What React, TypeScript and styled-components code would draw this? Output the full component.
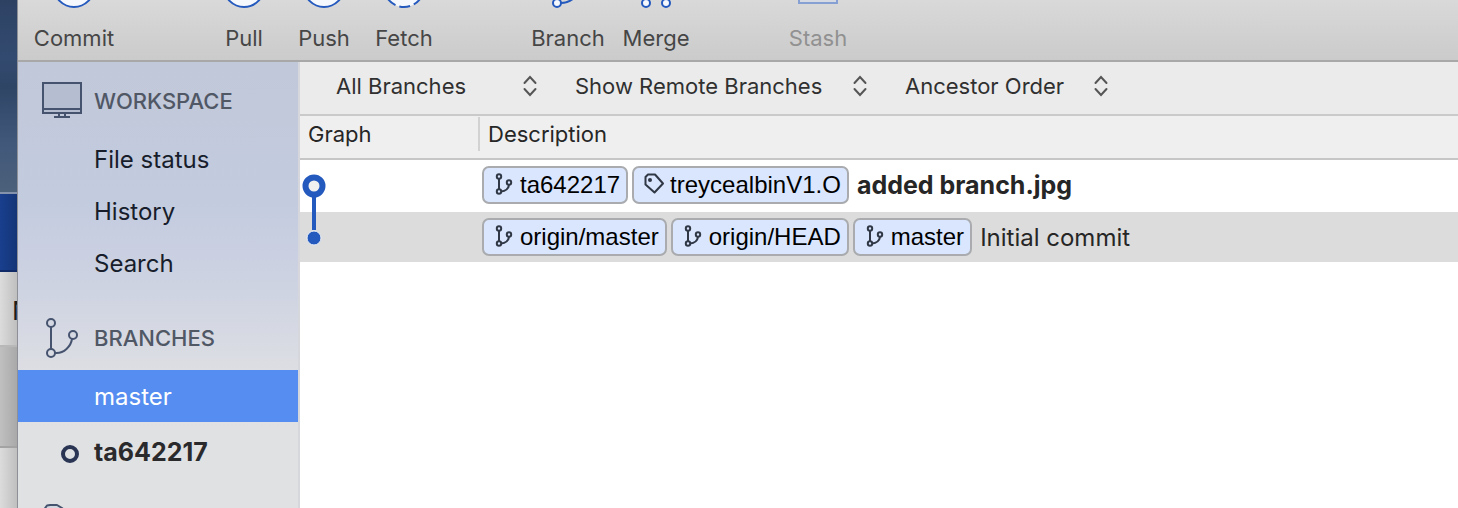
import React from "react";
import styled, { createGlobalStyle, css } from "styled-components";

const GlobalStyle = createGlobalStyle`
  *, *::before, *::after { box-sizing: border-box; }
  body {
    margin: 0;
    background: #fff;
    font-family: Inter, "Liberation Sans", sans-serif;
    color: #262626;
  }
  button, select { font: inherit; color: inherit; }
`;

const Desktop = styled.div`
  display: flex;
  height: 100vh;
  overflow: hidden;
`;

/* Slice of the desktop and of another window behind the main window */
const Behind = styled.div`
  flex: 0 0 18px;
  display: flex;
  flex-direction: column;
  overflow: hidden;
  border-right: 1px solid #8d9096;
`;

const Wallpaper = styled.div`
  flex: 0 0 192px;
  background: linear-gradient(#2d4263, #334a70 30%, #2f4566 45%, #42587b 75%, #4b6079);
`;

const BlueBanner = styled.div`
  flex: 0 0 80px;
  border-top: 2px solid #8492ab;
  border-bottom: 2px solid #0f2a66;
  background: linear-gradient(90deg, #193f8e, #143577);
`;

const BehindRow = styled.div<{ $height: number; $dark?: boolean }>`
  flex: 0 0 ${(p) => p.$height}px;
  display: flex;
  align-items: center;
  padding: 4px 0 0 12px;
  overflow: hidden;
  font-size: 26px;
  color: #1c1c1c;
  background: ${(p) =>
    p.$dark
      ? "linear-gradient(90deg, #c0c0c0, #a9a9a9)"
      : "linear-gradient(90deg, #dcdcdc, #bfbfbf)"};
  border-bottom: 2px solid ${(p) => (p.$dark ? "#a3a3a3" : "#b8b8b8")};
`;

const AppWindow = styled.div`
  flex: 1;
  min-width: 0;
  display: flex;
  flex-direction: column;
`;

const Toolbar = styled.header`
  flex: none;
  display: flex;
  height: 62px;
  padding-left: 16px;
  background: linear-gradient(#d9d9d9, #cbcbcb);
  border-bottom: 2px solid #a8a8a8;
`;

const ToolGroup = styled.div<{ $before?: number }>`
  display: flex;
  margin-left: ${(p) => p.$before ?? 0}px;
`;

const ToolButton = styled.button<{ $wide?: boolean }>`
  display: flex;
  flex-direction: column;
  align-items: center;
  gap: 16px;
  width: ${(p) => (p.$wide ? 88 : 80)}px;
  padding: 0;
  border: 0;
  background: none;
  font-size: 22px;
  line-height: 28px;
  color: #464646;
  white-space: nowrap;
  &:disabled { color: #919191; }
  svg { display: block; flex: none; }
`;

const Body = styled.div`
  flex: 1;
  min-height: 0;
  display: flex;
`;

const Sidebar = styled.nav`
  flex: 0 0 282px;
  padding-top: 7px;
  overflow: hidden;
  border-right: 2px solid #d5d7dc;
  background: linear-gradient(
    #c1c8d9 0, #c3cbdf 140px, #ced3e2 225px, #dbdde3 300px, #e0e1e3 370px, #e0e1e3 100%
  );
`;

const Section = styled.section`
  & + & { margin-top: 17px; }
`;

const SectionTitle = styled.h2`
  display: flex;
  align-items: center;
  gap: 12px;
  height: 64px;
  margin: 0;
  padding-left: 24px;
  font-size: 22px;
  font-weight: 500;
  color: #505765;
  svg { flex: none; }
`;

const NavList = styled.ul`
  margin: 0;
  padding: 0;
  list-style: none;
`;

const NavLink = styled.a<{ $selected?: boolean; $current?: boolean }>`
  display: flex;
  align-items: center;
  height: 52px;
  font-size: 24px;
  color: #171d2b;
  text-decoration: none;
  ${(p) => p.$selected && css`background: #558df0; color: #fff;`}
  ${(p) => p.$current && css`padding-top: 8px; font-size: 25px; font-weight: 700; color: #2a2a2c;`}
`;

const NavMark = styled.span`
  flex: 0 0 76px;
  display: flex;
  justify-content: flex-end;
  padding-right: 14px;
`;

const Main = styled.main`
  flex: 1;
  min-width: 0;
  background: #fff;
`;

const FilterBar = styled.div`
  display: flex;
  gap: 38px;
  height: 54px;
  padding: 0 36px 4px;
  background: #ebebeb;
  border-bottom: 2px solid #cacaca;
`;

const Picker = styled.label<{ $width: number }>`
  display: grid;
  align-items: center;
  width: ${(p) => p.$width}px;
  & > * { grid-area: 1 / 1; }
  svg { justify-self: end; pointer-events: none; }
`;

const PickerSelect = styled.select`
  appearance: none;
  width: 100%;
  padding: 0;
  border: 0;
  background: none;
  font-size: 22px;
  color: #303030;
`;

const LogTable = styled.table`
  width: 100%;
  table-layout: fixed;
  border-collapse: separate;
  border-spacing: 0;
`;

const HeadCell = styled.th<{ $width?: number }>`
  ${(p) => p.$width && css`width: ${p.$width}px;`}
  height: 44px;
  padding: 0 0 6px;
  text-align: left;
  background: #efefef;
  border-bottom: 2px solid #c6c6c6;
`;

const HeadLabel = styled.div<{ $divided?: boolean }>`
  padding-left: 8px;
  font-size: 22px;
  font-weight: 400;
  line-height: 34px;
  ${(p) => p.$divided && css`border-right: 2px solid #d2d2d2;`}
`;

const LogRow = styled.tr<{ $shaded?: boolean }>`
  height: ${(p) => (p.$shaded ? 50 : 52)}px;
  background: ${(p) => (p.$shaded ? "#dcdcdc" : "#fff")};
`;

const LogCell = styled.td`
  padding: 0;
  vertical-align: top;
  svg { display: block; }
`;

const Entry = styled.div`
  display: flex;
  align-items: center;
  gap: 4px;
  padding: 6px 0 0 2px;
`;

const Ref = styled.span`
  display: flex;
  align-items: center;
  gap: 2px;
  height: 38px;
  padding: 0 6px 0 10px;
  border: 2px solid #a9abae;
  border-radius: 7px;
  background: #dae6fd;
  font-family: "Liberation Sans", Arial, sans-serif;
  font-size: 24px;
  color: #000;
  white-space: nowrap;
`;

const Message = styled.span<{ $bold?: boolean }>`
  padding-left: 4px;
  font-size: ${(p) => (p.$bold ? 25 : 24)}px;
  font-weight: ${(p) => (p.$bold ? 700 : 400)};
  white-space: nowrap;
`;

const BLUE = "#2459bd";
const SLATE = "#46536f";

const CircleGlyph = ({ dashed }: { dashed?: boolean }) => (
  <svg width="40" height="8" viewBox="0 0 40 8" aria-hidden="true">
    <circle cx="20" cy="-13" r="20" fill="#f5f8fd" />
    <circle cx="20" cy="-13" r="20" fill="none" stroke={BLUE} strokeWidth="2"
      strokeDasharray={dashed ? "11 4" : undefined} strokeDashoffset={dashed ? 5 : undefined} />
  </svg>
);

const BranchGlyph = () => (
  <svg width="40" height="8" viewBox="0 0 40 8" fill="none" stroke={BLUE} strokeWidth="2" aria-hidden="true">
    <path d="M13 3C19 3 23 1 27-3" />
    <circle cx="9" cy="3" r="4" fill="#f5f8fd" />
  </svg>
);

const MergeGlyph = () => (
  <svg width="40" height="8" viewBox="0 0 40 8" fill="#f5f8fd" stroke={BLUE} strokeWidth="2" aria-hidden="true">
    <circle cx="10" cy="3" r="4" />
    <circle cx="30" cy="3" r="4" />
  </svg>
);

const StashGlyph = () => (
  <svg width="40" height="8" viewBox="0 0 40 8" aria-hidden="true">
    <rect x="1" y="-20" width="38" height="23" fill="#d6dae3" stroke="#86a0d4" strokeWidth="2" />
  </svg>
);

const MonitorIcon = () => (
  <svg width="40" height="40" viewBox="0 -1 40 40" fill="none" stroke={SLATE} strokeWidth="2" aria-hidden="true">
    <rect x="1" y="1" width="38" height="30" fill="#b5bdd0" />
    <path d="M1 27H39M17 31V34M23 31V34M12 35H28" />
  </svg>
);

const BranchIcon = () => (
  <svg width="40" height="40" viewBox="0 0 40 40" fill="none" stroke={SLATE} strokeWidth="2" aria-hidden="true">
    <path d="M9 9V31M13 35C22 36 29 28 30 21" />
    <circle cx="9" cy="5" r="4" />
    <circle cx="9" cy="35" r="4" />
    <circle cx="31" cy="17" r="4" />
  </svg>
);

const TagIcon = () => (
  <svg width="40" height="40" viewBox="0 0 40 40" fill="#d3d7df" stroke={SLATE} strokeWidth="2" aria-hidden="true">
    <path d="M1 8L5 2.500L8 2H15L20 5L38 23L22 39L1 18Z" strokeLinejoin="round" />
  </svg>
);

const RefBranch = () => (
  <svg width="24" height="24" viewBox="0 0 24 24" fill="none" stroke="#303846" strokeWidth="2" aria-hidden="true">
    <path d="M5 6V16M7 18.500C12 18.500 14.500 15 15 12" />
    <circle cx="5" cy="3.500" r="2.200" />
    <circle cx="5" cy="18.500" r="2.200" />
    <circle cx="15" cy="9.500" r="2.200" />
  </svg>
);

const RefTag = () => (
  <svg width="24" height="24" viewBox="0 0 24 24" fill="none" stroke="#303846" strokeWidth="2" aria-hidden="true">
    <path d="M1.500 4L4 1.500H11L19 10.500L10.500 19.500L1.500 11.500Z" strokeLinejoin="round" />
    <circle cx="6" cy="7" r="2" fill="#303846" stroke="none" />
  </svg>
);

const Chevrons = () => (
  <svg width="14" height="22" viewBox="0 0 14 22" fill="none" stroke="#555" strokeWidth="2" aria-hidden="true">
    <path d="M1.500 8L7 2L12.500 8M1.500 14L7 20L12.500 14" strokeLinecap="round" />
  </svg>
);

const HeadNode = () => (
  <svg width="28" height="52" viewBox="0 0 28 52" aria-hidden="true">
    <path d="M14 26V52" stroke={BLUE} strokeWidth="4" />
    <circle cx="14" cy="26" r="8.500" fill="#f0f0f0" stroke={BLUE} strokeWidth="6" />
  </svg>
);

const TailNode = () => (
  <svg width="28" height="50" viewBox="0 0 28 50" aria-hidden="true">
    <path d="M14 0V18" stroke={BLUE} strokeWidth="4" />
    <circle cx="14" cy="26" r="7" fill={BLUE} stroke="#e9eef8" strokeWidth="1" />
  </svg>
);

const CurrentMark = () => (
  <svg width="20" height="24" viewBox="0 0 20 24" aria-hidden="true">
    <circle cx="10" cy="14" r="7" fill="none" stroke="#2a3554" strokeWidth="4" />
  </svg>
);

const FilterPicker = ({ label, value, width }: { label: string; value: string; width: number }) => (
  <Picker $width={width}>
    <PickerSelect aria-label={label} defaultValue={value}>
      <option>{value}</option>
    </PickerSelect>
    <Chevrons />
  </Picker>
);

export default function App() {
  return (
    <>
      <GlobalStyle />
      <Desktop>
        <Behind>
          <Wallpaper />
          <BlueBanner />
          <BehindRow $height={75}>N</BehindRow>
          <BehindRow $height={101} $dark />
          <BehindRow $height={80} />
        </Behind>
        <AppWindow>
          <Toolbar>
            <ToolGroup>
              <ToolButton><CircleGlyph />Commit</ToolButton>
            </ToolGroup>
            <ToolGroup $before={90}>
              <ToolButton><CircleGlyph />Pull</ToolButton>
              <ToolButton><CircleGlyph />Push</ToolButton>
              <ToolButton><CircleGlyph dashed />Fetch</ToolButton>
            </ToolGroup>
            <ToolGroup $before={80}>
              <ToolButton $wide><BranchGlyph />Branch</ToolButton>
              <ToolButton $wide><MergeGlyph />Merge</ToolButton>
            </ToolGroup>
            <ToolGroup $before={74}>
              <ToolButton $wide disabled><StashGlyph />Stash</ToolButton>
            </ToolGroup>
          </Toolbar>
          <Body>
            <Sidebar>
              <Section>
                <SectionTitle><MonitorIcon />WORKSPACE</SectionTitle>
                <NavList>
                  <li><NavLink href="#status"><NavMark />File status</NavLink></li>
                  <li><NavLink href="#history"><NavMark />History</NavLink></li>
                  <li><NavLink href="#search"><NavMark />Search</NavLink></li>
                </NavList>
              </Section>
              <Section>
                <SectionTitle><BranchIcon />BRANCHES</SectionTitle>
                <NavList>
                  <li><NavLink href="#master" $selected><NavMark />master</NavLink></li>
                  <li>
                    <NavLink href="#ta642217" $current>
                      <NavMark><CurrentMark /></NavMark>
                      ta642217
                    </NavLink>
                  </li>
                </NavList>
              </Section>
              <Section>
                <SectionTitle><TagIcon /></SectionTitle>
              </Section>
            </Sidebar>
            <Main>
              <FilterBar>
                <FilterPicker label="Branches" value="All Branches" width={201} />
                <FilterPicker label="Remote branches" value="Show Remote Branches" width={292} />
                <FilterPicker label="Order" value="Ancestor Order" width={203} />
              </FilterBar>
              <LogTable>
                <thead>
                  <tr>
                    <HeadCell $width={180}><HeadLabel $divided>Graph</HeadLabel></HeadCell>
                    <HeadCell><HeadLabel>Description</HeadLabel></HeadCell>
                  </tr>
                </thead>
                <tbody>
                  <LogRow>
                    <LogCell><HeadNode /></LogCell>
                    <LogCell>
                      <Entry>
                        <Ref><RefBranch />ta642217</Ref>
                        <Ref><RefTag />treycealbinV1.O</Ref>
                        <Message $bold>added branch.jpg</Message>
                      </Entry>
                    </LogCell>
                  </LogRow>
                  <LogRow $shaded>
                    <LogCell><TailNode /></LogCell>
                    <LogCell>
                      <Entry>
                        <Ref><RefBranch />origin/master</Ref>
                        <Ref><RefBranch />origin/HEAD</Ref>
                        <Ref><RefBranch />master</Ref>
                        <Message>Initial commit</Message>
                      </Entry>
                    </LogCell>
                  </LogRow>
                </tbody>
              </LogTable>
            </Main>
          </Body>
        </AppWindow>
      </Desktop>
    </>
  );
}
